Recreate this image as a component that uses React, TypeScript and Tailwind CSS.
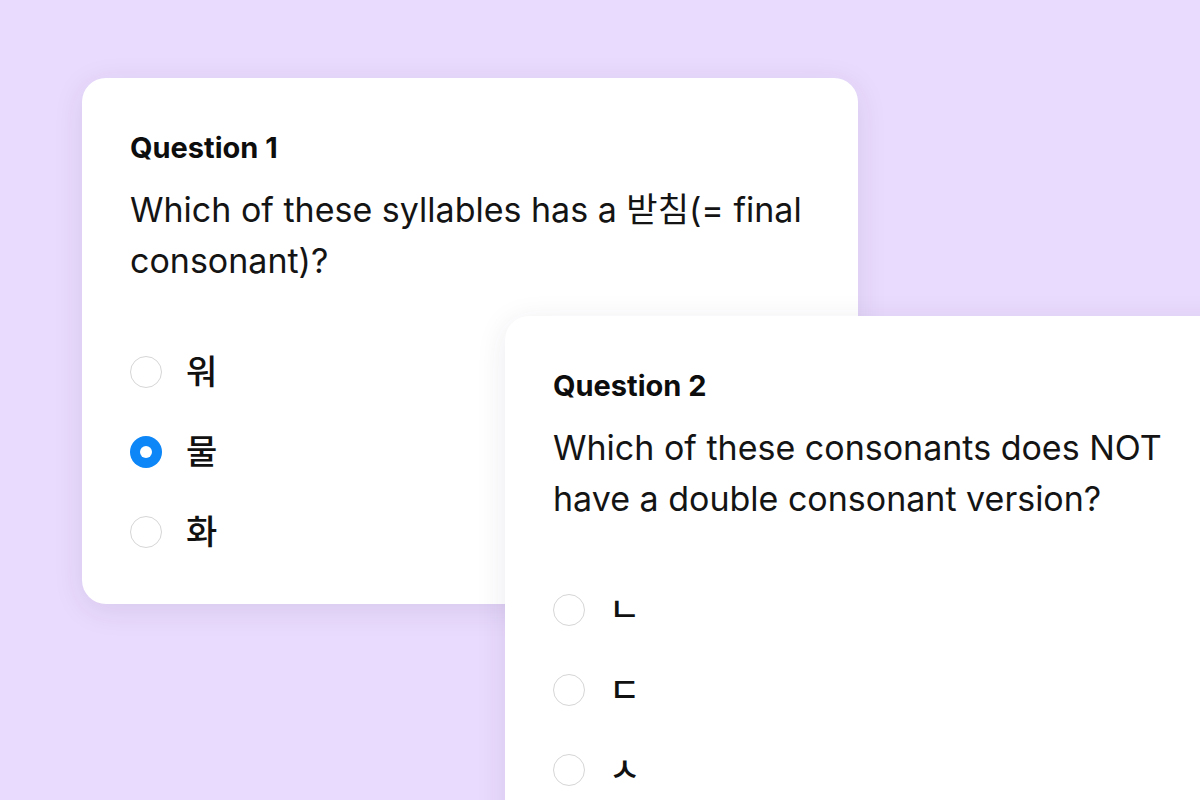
import React from 'react';

type Question = {
  title: string;
  text: string;
  options: string[];
  selected?: number;
};

const questions: Question[] = [
  {
    title: 'Question 1',
    text: 'Which of these syllables has a 받침(= final consonant)?',
    options: ['워', '물', '화'],
    selected: 1,
  },
  {
    title: 'Question 2',
    text: 'Which of these consonants does NOT have a double consonant version?',
    options: ['ㄴ', 'ㄷ', 'ㅅ'],
  },
];

function Radio({ checked }: { checked: boolean }) {
  if (checked) {
    return (
      <span className="flex h-8 w-8 shrink-0 items-center justify-center rounded-full bg-[#0d86f7]">
        <span className="h-3 w-3 rounded-full bg-white" />
      </span>
    );
  }
  return <span className="h-8 w-8 shrink-0 rounded-full border-[1.5px] border-[#d6d6d6] bg-white" />;
}

function QuestionCard({ q, className }: { q: Question; className: string }) {
  return (
    <div
      className={`absolute w-[776px] rounded-[24px] bg-white px-12 pt-[54px] pb-12 shadow-[0_6px_30px_rgba(60,40,90,0.10)] ${className}`}
    >
      <div className="text-[29px] leading-[32px] font-bold text-[#0d0d0d]">{q.title}</div>
      <p className="mt-[20px] text-[34px] leading-[51px] text-[#141414]">{q.text}</p>
      <div className="mt-[62px] flex flex-col gap-8">
        {q.options.map((opt, i) => (
          <div key={opt} className="flex h-12 items-center gap-6">
            <Radio checked={q.selected === i} />
            <span className="text-[34px] leading-[48px] font-medium text-[#111]">{opt}</span>
          </div>
        ))}
      </div>
    </div>
  );
}

export default function App() {
  return (
    <div
      className="relative h-[800px] w-[1200px] overflow-hidden bg-[#e9dbfd]"
      style={{ fontFamily: 'Inter, "Noto Sans CJK KR", "Noto Sans", sans-serif' }}
    >
      <QuestionCard q={questions[0]} className="left-[82px] top-[78px]" />
      <QuestionCard q={questions[1]} className="left-[505px] top-[316px]" />
    </div>
  );
}
